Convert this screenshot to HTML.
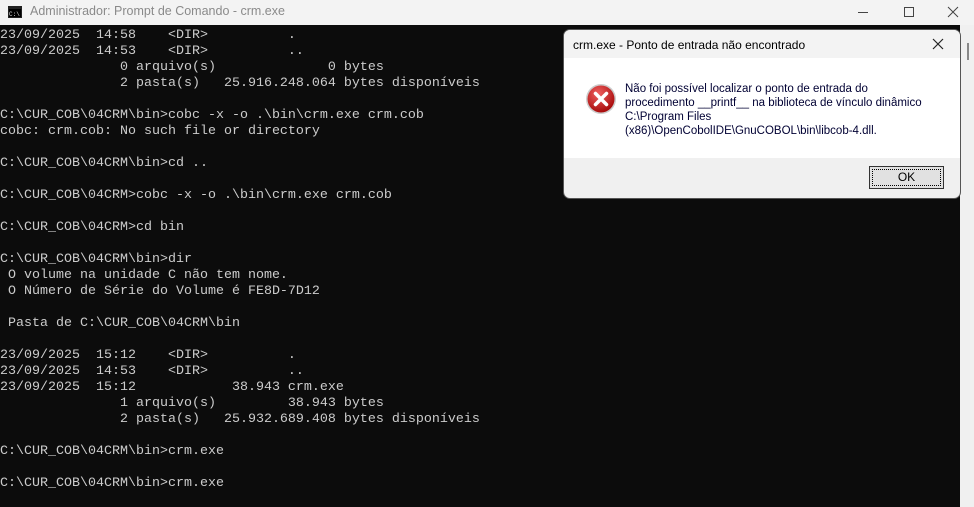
<!DOCTYPE html>
<html><head><meta charset="utf-8"><style>
*{margin:0;padding:0;box-sizing:border-box}
body{width:974px;height:507px;overflow:hidden;background:#0c0c0c;position:relative;font-family:"Liberation Sans",sans-serif}
#tb{position:absolute;left:0;top:0;width:974px;height:25px;background:#f3f3f3}
#tb .t{position:absolute;left:30px;top:4px;font-size:12.5px;color:#8a8a8a}
#con{position:absolute;left:0;top:28px;width:960px;height:479px;color:#cccccc;font-family:"Liberation Mono",monospace;font-size:13.33px;line-height:16px;white-space:pre}
#sb{position:absolute;left:960px;top:25px;width:14px;height:482px;background:#f0f0f0}
#dlg{position:absolute;left:563px;top:29px;width:398px;height:170px;background:#f0f0f0;border:1px solid #555;border-radius:7px;overflow:hidden}
#dlg .h{height:28px;background:#f3f3f3;font-size:12px;color:#000;padding:8px 0 0 9px}
#dlg .b{position:absolute;left:0;top:28px;width:100%;height:100px;background:#fff}
#dlg .m{position:absolute;left:61px;top:24px;font-size:11.5px;line-height:14px;color:#000033}
#ok{position:absolute;left:305px;top:136px;width:75px;height:23px;border:1px solid #333;background:#e1e1e1;font-size:12px;text-align:center;line-height:20px;outline:1px dotted #000;outline-offset:-4px}
</style></head><body>
<div id="tb">
<svg style="position:absolute;left:8px;top:6px" width="14" height="12"><rect x="0" y="0" width="14" height="12" fill="#222"/><rect x="1" y="3" width="12" height="8" fill="#000"/><text x="1" y="10" font-size="6" fill="#ddd" font-family="Liberation Mono">C:\</text></svg>
<div class="t">Administrador: Prompt de Comando - crm.exe</div>
<svg style="position:absolute;left:858px;top:4px" width="110" height="16"><line x1="0" y1="8.5" x2="10" y2="8.5" stroke="#444"/><rect x="46.5" y="3.5" width="9" height="9" fill="none" stroke="#444"/><path d="M90 3 L100 13 M100 3 L90 13" stroke="#444"/></svg>
</div>
<div id="con">23/09/2025  14:58    &lt;DIR&gt;          .
23/09/2025  14:53    &lt;DIR&gt;          ..
               0 arquivo(s)              0 bytes
               2 pasta(s)   25.916.248.064 bytes disponíveis

C:\CUR_COB\04CRM\bin&gt;cobc -x -o .\bin\crm.exe crm.cob
cobc: crm.cob: No such file or directory

C:\CUR_COB\04CRM\bin&gt;cd ..

C:\CUR_COB\04CRM&gt;cobc -x -o .\bin\crm.exe crm.cob

C:\CUR_COB\04CRM&gt;cd bin

C:\CUR_COB\04CRM\bin&gt;dir
 O volume na unidade C não tem nome.
 O Número de Série do Volume é FE8D-7D12

 Pasta de C:\CUR_COB\04CRM\bin

23/09/2025  15:12    &lt;DIR&gt;          .
23/09/2025  14:53    &lt;DIR&gt;          ..
23/09/2025  15:12            38.943 crm.exe
               1 arquivo(s)         38.943 bytes
               2 pasta(s)   25.932.689.408 bytes disponíveis

C:\CUR_COB\04CRM\bin&gt;crm.exe

C:\CUR_COB\04CRM\bin&gt;crm.exe</div>
<div id="sb"><div style="position:absolute;left:7px;top:18px;width:2px;height:17px;background:#888"></div></div>
<div id="dlg">
<div class="h">crm.exe - Ponto de entrada não encontrado</div>
<svg style="position:absolute;left:368px;top:8px" width="12" height="12"><path d="M1 1 L11 11 M11 1 L1 11" stroke="#222" stroke-width="1.2"/></svg>
<div class="b">
<svg style="position:absolute;left:21px;top:25px" width="32" height="32"><defs><radialGradient id="g" cx="40%" cy="30%" r="70%"><stop offset="0" stop-color="#f06060"/><stop offset="1" stop-color="#a80c0c"/></radialGradient></defs><circle cx="16" cy="16" r="15" fill="#ccc"/><circle cx="16" cy="16" r="13.5" fill="url(#g)"/><path d="M10.5 10.5 L21.5 21.5 M21.5 10.5 L10.5 21.5" stroke="#fff" stroke-width="3.5" stroke-linecap="round"/></svg>
<div class="m">Não foi possível localizar o ponto de entrada do<br>procedimento __printf__ na biblioteca de vínculo dinâmico<br>C:\Program Files<br>(x86)\OpenCobolIDE\GnuCOBOL\bin\libcob-4.dll.</div>
</div>
<div id="ok">OK</div>
</div>
</body></html>
